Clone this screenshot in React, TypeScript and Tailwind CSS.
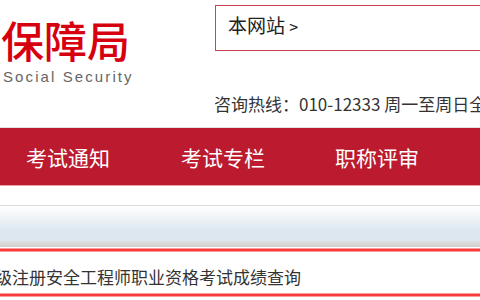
export default function App() {
  return (
    <div className="w-[480px] h-[300px] overflow-hidden bg-white font-['Noto_Sans_CJK_SC',sans-serif]">
      {/* header */}
      <div className="flex h-[127px]">
        <div className="w-[215px] shrink-0 pl-[1px] pt-[17px]">
          <div className="text-[43px] leading-[44px] font-medium text-[#d7000f]">
            保障局
          </div>
          <div className="mt-[8px] font-['Liberation_Sans',sans-serif] text-[15px] leading-[16px] tracking-[2.1px] text-[#666] pl-[2px]">
            Social Security
          </div>
        </div>
        <div className="flex-1 min-w-0 overflow-hidden">
          <div className="mt-[5px] h-[46px] w-[300px] border border-[#c94451] pl-[12px] pt-[7px] text-[19px] leading-[24px] text-[#222] whitespace-nowrap">
            本网站 <span className="text-[16px]">&gt;</span>
          </div>
          <div className="mt-[42px] -ml-[1px] whitespace-nowrap text-[17px] leading-[22px] text-[#333]">
            咨询热线：010-12333 周一至周日全天
          </div>
        </div>
      </div>

      {/* nav */}
      <div className="h-[59px] border-t border-[#e2e2e2] border-b border-b-[#e8a0a8] bg-[#bc1a2e] flex items-center pl-[26px] text-white text-[21px] leading-[28px]">
        <div className="w-[155px] shrink-0">考试通知</div>
        <div className="w-[154px] shrink-0">考试专栏</div>
        <div className="w-[155px] shrink-0">职称评审</div>
      </div>

      {/* band */}
      <div className="h-[19px]" />
      <div className="h-[1px] bg-[#dcdcdc]" />
      <div className="h-[24px] bg-gradient-to-b from-white to-[#dde8f0]" />
      <div className="h-[11px] bg-[#dce7ef]" />
      <div className="h-[6px] bg-gradient-to-b from-[#dedede] to-[#cfcfcf]" />
      <div className="h-[1px] bg-white" />
      <div className="h-[1px] bg-[#ff9a9a]" />
      <div className="h-[2px] bg-[#f53b3b]" />
      <div className="h-[1px] bg-[#ff9a9a]" />

      {/* row */}
      <div className="h-[41px] flex items-center -ml-[5px] text-[17px] leading-[22px] text-[#333] whitespace-nowrap pt-[8px]">
        级注册安全工程师职业资格考试成绩查询
      </div>
      <div className="h-[1px] bg-[#ff9a9a]" />
      <div className="h-[2px] bg-[#f53b3b]" />
      <div className="h-[1px] bg-[#ff9a9a]" />
    </div>
  );
}
